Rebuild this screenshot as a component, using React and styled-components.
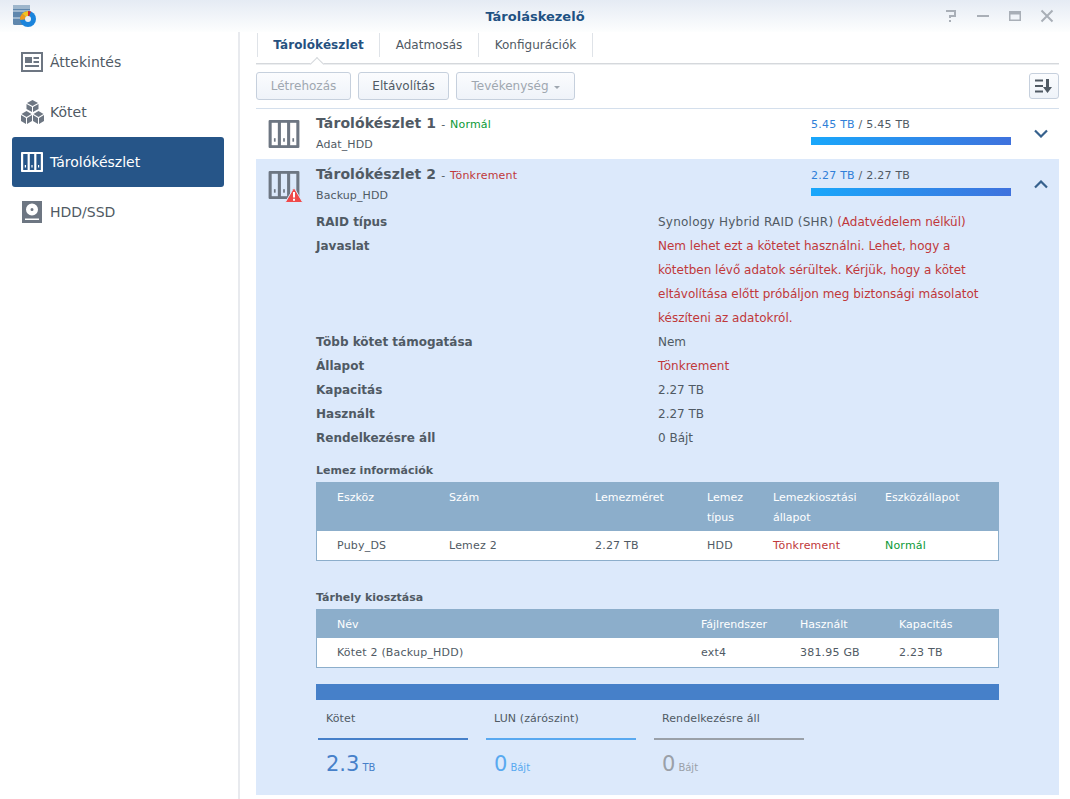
import React from 'react'
import styled, { createGlobalStyle } from 'styled-components'

const Global = createGlobalStyle`
	html, body { margin: 0; padding: 0; background: #fff; }
	body { font-family: "DejaVu Sans", Verdana, sans-serif; font-size: 12px; color: #505a64; }
`

const Window = styled.div`
	width: 1070px;
	height: 799px;
	overflow: hidden;
	display: flex;
	flex-direction: column;
`

const TitleBar = styled.div`
	height: 32px;
	flex: none;
	display: flex;
	align-items: center;
	position: relative;
	background: linear-gradient(#e5ebf4, #fdfefe);
	padding-left: 13px;
`

const WindowTitle = styled.div`
	position: absolute;
	left: 0;
	right: 0;
	text-align: center;
	font-size: 13px;
	font-weight: bold;
	color: #1f5283;
`

const WindowControls = styled.div`
	margin-left: auto;
	margin-right: 15px;
	display: flex;
	gap: 16px;
	position: relative;
`

const Body = styled.div`
	flex: 1;
	display: flex;
	min-height: 0;
`

const Sidebar = styled.div`
	width: 240px;
	flex: none;
	padding: 5px 14px 0 12px;
	box-sizing: border-box;
	border-right: 2px solid #e8eaee;
	margin-right: 16px;
`

const NavItem = styled.div`
	height: 50px;
	display: flex;
	align-items: center;
	padding-left: 9px;
	border-radius: 3px;
	font-size: 14px;
	color: ${props => props.$active ? '#fff' : '#505a64'};
	background: ${props => props.$active ? '#265588' : 'transparent'};
`

const NavIcon = styled.span`
	width: 29px;
	flex: none;
	display: flex;
	padding-left: ${props => props.$inset || 0}px;
	box-sizing: border-box;
`

const Main = styled.div`
	width: 803px;
	flex: none;
`

const Tabs = styled.div`
	height: 32px;
	box-sizing: border-box;
	display: flex;
	border-bottom: 1px solid #d5d8dc;
	box-shadow: 0 1px 0 #eceef0;
	position: relative;
`

const Tab = styled.div`
	width: ${props => props.$w}px;
	height: 24px;
	margin-top: 1px;
	padding-bottom: 1px;
	display: flex;
	align-items: center;
	justify-content: center;
	box-sizing: border-box;
	border-right: 1px solid #dfe3e8;
	font-size: 12px;
	letter-spacing: ${props => props.$active ? '0.1px' : '0'};
	font-weight: ${props => props.$active ? 'bold' : 'normal'};
	color: ${props => props.$active ? '#26517f' : '#505a64'};
	&:first-child { border-left: 1px solid #dfe3e8; margin-left: 1px; }
`

const Notch = styled.div`
	position: absolute;
	left: 56px;
	bottom: -1px;
	width: 9px;
	height: 9px;
	background: #fff;
	border-left: 1px solid #d5d8dc;
	border-top: 1px solid #d5d8dc;
	transform: translateY(5px) rotate(45deg);
`

const Toolbar = styled.div`
	height: 45px;
	display: flex;
	align-items: flex-start;
	gap: 7px;
	border-bottom: 1px solid #d4dfec;
	padding-top: 8px;
	box-sizing: border-box;
`

const Button = styled.div`
	height: 28px;
	width: ${props => props.$w}px;
	box-sizing: border-box;
	display: flex;
	align-items: center;
	justify-content: center;
	gap: 5px;
	border: 1px solid #c6d0dd;
	border-radius: 3px;
	background: linear-gradient(#fbfcfe, #eff3f9);
	font-size: 12px;
	color: ${props => props.$disabled ? '#9fa7b0' : '#505a64'};
`

const Caret = styled.span`
	width: 0;
	height: 0;
	border-left: 3px solid transparent;
	border-right: 3px solid transparent;
	border-top: 3px solid #9fa7b0;
	margin-top: 2px;
`

const SortButton = styled(Button)`
	margin-left: auto;
	margin-top: 1px;
	height: 26px;
`

const PoolRow = styled.div`
	height: ${props => props.$open ? '51px' : '50px'};
	box-sizing: border-box;
	padding-top: ${props => props.$open ? '1px' : '0'};
	display: grid;
	grid-template-columns: 60px 495px 200px 48px;
	background: ${props => props.$open ? '#dce9fb' : '#fff'};
`

const PoolIcon = styled.div`
	padding: 11px 0 0 12px;
	position: relative;
`

const PoolText = styled.div`
	padding-top: 4px;
`

const PoolName = styled.div`
	line-height: 20px;
	font-size: 14px;
	font-weight: bold;
	letter-spacing: 0.1px;
	color: #505a64;
	display: flex;
	align-items: baseline;
	gap: 5px;
`

const PoolStatus = styled.span`
	font-size: 11px;
	font-weight: normal;
	letter-spacing: 0.2px;
	color: #505a64;
	word-spacing: 1px;
`

const Status = styled.span`
	color: ${props => props.$bad ? '#c0383a' : '#0b9a36'};
`

const PoolSub = styled.div`
	font-size: 11px;
	line-height: 20px;
	letter-spacing: 0.1px;
`

const Usage = styled.div`
	padding-top: 7px;
	font-size: 11px;
	line-height: 18px;
	letter-spacing: 0.23px;
`

const UsageUsed = styled.span`
	color: #2f7fd8;
`

const UsageBar = styled.div`
	height: 8px;
	margin-top: 3px;
	background: linear-gradient(90deg, #19a7fb, #3f72dd);
`

const Chevron = styled.div`
	display: flex;
	justify-content: center;
	padding: 20px 0 0 12px;
`

const Detail = styled.div`
	background: #dce9fb;
	height: 585px;
	padding: 0 60px;
	box-sizing: border-box;
`

const InfoGrid = styled.div`
	display: grid;
	grid-template-columns: 342px 340px;
	line-height: 24px;
	font-size: 12px;
`

const InfoLabel = styled.div`
	font-weight: bold;
`

const InfoValue = styled.div`
	color: ${props => props.$bad ? '#c0383a' : '#505a64'};
`

const RaidName = styled.span`
	letter-spacing: 0.23px;
`

const Red = styled.span`
	color: #c0383a;
`

const SectionTitle = styled.div`
	font-size: 11px;
	font-weight: bold;
	line-height: 16px;
	margin-top: ${props => props.$top + 1}px;
	margin-bottom: 3px;
`

const Table = styled.table`
	width: 683px;
	table-layout: fixed;
	border-collapse: separate;
	border-spacing: 0;
	background: #fff;
	box-sizing: border-box;
	border: 1px solid #8caecb;
	font-size: 11px;
`

const Th = styled.th`
	width: ${props => props.$w}px;
	box-sizing: border-box;
	background: #8caecb;
	color: #fff;
	font-weight: normal;
	text-align: left;
	vertical-align: top;
	padding: 5px 8px 3px 20px;
	line-height: 20px;
`

const Td = styled.td`
	padding: 0 0 0 20px;
	height: 29px;
	letter-spacing: 0.2px;
	color: ${props => props.$c || '#505a64'};
`

const StackBar = styled.div`
	width: 683px;
	height: 16px;
	background: #4680c9;
	margin-top: 16px;
`

const Legend = styled.div`
	display: flex;
	gap: 18px;
	padding: 9px 0 0 2px;
`

const LegendItem = styled.div`
	width: 150px;
	color: ${props => props.$c};
`

const LegendLabel = styled.div`
	font-size: 11px;
	line-height: 20px;
	height: 29px;
	padding-left: 8px;
	letter-spacing: 0.1px;
	color: #505a64;
	border-bottom: 2px solid ${props => props.$c};
`

const LegendValue = styled.div`
	padding: 12px 0 0 8px;
	font-size: 10px;
	display: flex;
	align-items: baseline;
	gap: 3px;
`

const BigNum = styled.span`
	font-size: 21px;
`

const DocIcon = ({ color }) => (
	<svg width="22" height="20" viewBox="0 0 22 20">
		<path fillRule="evenodd" fill={color} d="M0 0h22v20H0zM2 2v16h18V2zM4 5h7v6H4zM12.500 5h5.500v2h-5.500zM12.500 9h5.500v2h-5.500zM4 13h14v2H4z" />
	</svg>
)

const CubesIcon = ({ color }) => (
	<svg width="23" height="24" viewBox="0 0 23 24">
		<g fill={color}>
			<path d="M11.500 0l5.500 3-5.500 3-5.500-3z" />
			<path d="M5.500 4l5.500 3v5l-5.500-3zM17.500 4l-5.500 3v5l5.500-3z" />
			<path d="M5.500 11l5 3-5 3-5-3z" />
			<path d="M0 15l5 3v6l-5-3zM11 15l-5 3v6l5-3z" />
			<path d="M17.500 11l5 3-5 3-5-3z" />
			<path d="M12 15l5 3v6l-5-3zM23 15l-5 3v6l5-3z" />
		</g>
	</svg>
)

const PoolGlyph = ({ color, hole, size = 22, height = 20 }) => (
	<svg width={size} height={height} viewBox="0 0 22 20">
		<rect width="22" height="20" rx="0.800" fill={color} />
		<g fill={hole}>
			<rect x="2.200" y="2" width="4.400" height="16" />
			<rect x="8.800" y="2" width="4.400" height="16" />
			<rect x="15.400" y="2" width="4.400" height="16" />
		</g>
		<g fill={color}>
			<rect x="3.800" y="13" width="1.200" height="2.500" />
			<rect x="10.400" y="13" width="1.200" height="2.500" />
			<rect x="17" y="13" width="1.200" height="2.500" />
		</g>
	</svg>
)

const DiskIcon = ({ color }) => (
	<svg width="20" height="22" viewBox="0 0 20 22">
		<path fillRule="evenodd" fill={color} d="M0 0h20v22H0zM10 2.500a6 6 0 1 0 0 12a6 6 0 1 0 0-12zM10 7a1.500 1.500 0 1 1 0 3a1.500 1.500 0 1 1 0-3zM3 17.500v1.500h14v-1.500z" />
	</svg>
)

const WarnIcon = styled.svg`
	position: absolute;
	left: 29px;
	top: 27px;
`

const AppIcon = () => (
	<svg width="24" height="22" viewBox="0 0 24 22">
		<rect x="0" y="0" width="17" height="20" rx="1.500" fill="#5f87ad" />
		<path d="M0 6h17M0 13h17" stroke="#dfe7ef" strokeWidth="1" />
		<rect x="0" y="0" width="17" height="4" fill="#9db6cc" />
		<circle cx="15" cy="14" r="8" fill="#1a84dc" />
		<path d="M15 14L9 8.500A8 8 0 0 1 15 6z" fill="#f4c21f" />
		<path d="M15 14V6a8 8 0 0 1 3 .6z" fill="#d92b2b" />
		<path d="M15 14L9 8.500A8 8 0 0 0 7.200 15z" fill="#f09a1a" />
		<circle cx="15" cy="14" r="3" fill="#e8eef5" />
	</svg>
)

const Chev = ({ up }) => (
	<svg width="14" height="9" viewBox="0 0 14 9">
		<path d={up ? 'M1 7.500L7 1.500l6 6' : 'M1 1.500L7 7.500l6-6'} fill="none" stroke="#36618d" strokeWidth="2.200" />
	</svg>
)

const diskCols = [112, 146, 112, 66, 112, 133]
const volCols = [364, 99, 99, 119]

export default function App() {
	return (
		<Window>
			<Global />
			<TitleBar>
				<AppIcon />
				<WindowTitle>Tároláskezelő</WindowTitle>
				<WindowControls>
					<svg width="16" height="14" viewBox="0 0 16 14"><path d="M3 2h9v5H7v2M7 11v2" fill="none" stroke="#a9afb7" strokeWidth="2" /></svg>
					<svg width="16" height="14" viewBox="0 0 16 14"><path d="M2 7h12" stroke="#a9afb7" strokeWidth="2" /></svg>
					<svg width="16" height="14" viewBox="0 0 16 14"><path fillRule="evenodd" d="M2 2h12v10H2zM3.500 5.500v5h9v-5z" fill="#a9afb7" /></svg>
					<svg width="16" height="14" viewBox="0 0 16 14"><path d="M2.500 1.500l11 11M13.500 1.500l-11 11" stroke="#a9afb7" strokeWidth="2" /></svg>
				</WindowControls>
			</TitleBar>
			<Body>
				<Sidebar>
					<NavItem><NavIcon><DocIcon color="#6d7682" /></NavIcon>Áttekintés</NavItem>
					<NavItem><NavIcon><CubesIcon color="#6d7682" /></NavIcon>Kötet</NavItem>
					<NavItem $active><NavIcon><PoolGlyph color="#fff" hole="#265588" /></NavIcon>Tárolókészlet</NavItem>
					<NavItem><NavIcon $inset={1}><DiskIcon color="#6d7682" /></NavIcon>HDD/SSD</NavItem>
				</Sidebar>
				<Main>
					<Tabs>
						<Tab $w={123} $active>Tárolókészlet</Tab>
						<Tab $w={99}>Adatmosás</Tab>
						<Tab $w={114}>Konfigurációk</Tab>
						<Notch />
					</Tabs>
					<Toolbar>
						<Button $w={95} $disabled>Létrehozás</Button>
						<Button $w={91}>Eltávolítás</Button>
						<Button $w={119} $disabled>Tevékenység <Caret /></Button>
						<SortButton $w={30}>
							<svg width="18" height="14" viewBox="0 0 18 14"><path d="M0 1.500h8M0 7h8M0 12.500h8" stroke="#505a64" strokeWidth="2" /><path d="M11 0h3v8h3l-4.500 6L8 8h3z" fill="#505a64" /></svg>
						</SortButton>
					</Toolbar>
					<PoolRow>
						<PoolIcon><PoolGlyph color="#6d7682" hole="#fff" size={32} height={28} /></PoolIcon>
						<PoolText>
							<PoolName>Tárolókészlet 1 <PoolStatus>- <Status>Normál</Status></PoolStatus></PoolName>
							<PoolSub>Adat_HDD</PoolSub>
						</PoolText>
						<Usage>
							<UsageUsed>5.45 TB</UsageUsed> / 5.45 TB
							<UsageBar />
						</Usage>
						<Chevron><Chev /></Chevron>
					</PoolRow>
					<PoolRow $open>
						<PoolIcon>
							<PoolGlyph color="#6d7682" hole="#dce9fb" size={32} height={28} />
							<WarnIcon width="18" height="16" viewBox="0 0 18 16">
								<path d="M9 0.500L17.800 15.500H0.200z" fill="#f04a4a" stroke="#dce9fb" strokeWidth="1" />
								<path d="M8 5h2v5.500H8zM8 11.800h2v2H8z" fill="#fff" />
							</WarnIcon>
						</PoolIcon>
						<PoolText>
							<PoolName>Tárolókészlet 2 <PoolStatus>- <Status $bad>Tönkrement</Status></PoolStatus></PoolName>
							<PoolSub>Backup_HDD</PoolSub>
						</PoolText>
						<Usage>
							<UsageUsed>2.27 TB</UsageUsed> / 2.27 TB
							<UsageBar />
						</Usage>
						<Chevron><Chev up /></Chevron>
					</PoolRow>
					<Detail>
						<InfoGrid>
							<InfoLabel>RAID típus</InfoLabel>
							<InfoValue><RaidName>Synology Hybrid RAID (SHR)</RaidName> <Red>(Adatvédelem nélkül)</Red></InfoValue>
							<InfoLabel>Javaslat</InfoLabel>
							<InfoValue $bad>Nem lehet ezt a kötetet használni. Lehet, hogy a kötetben lévő adatok sérültek. Kérjük, hogy a kötet eltávolítása előtt próbáljon meg biztonsági másolatot készíteni az adatokról.</InfoValue>
							<InfoLabel>Több kötet támogatása</InfoLabel>
							<InfoValue>Nem</InfoValue>
							<InfoLabel>Állapot</InfoLabel>
							<InfoValue $bad>Tönkrement</InfoValue>
							<InfoLabel>Kapacitás</InfoLabel>
							<InfoValue>2.27 TB</InfoValue>
							<InfoLabel>Használt</InfoLabel>
							<InfoValue>2.27 TB</InfoValue>
							<InfoLabel>Rendelkezésre áll</InfoLabel>
							<InfoValue>0 Bájt</InfoValue>
						</InfoGrid>
						<SectionTitle $top={12}>Lemez információk</SectionTitle>
						<Table>
							<thead>
								<tr>
									{['Eszköz', 'Szám', 'Lemezméret', 'Lemez típus', 'Lemezkiosztási állapot', 'Eszközállapot'].map((h, i) => (
										<Th key={h} $w={diskCols[i]}>{h}</Th>
									))}
								</tr>
							</thead>
							<tbody>
								<tr>
									<Td>Puby_DS</Td>
									<Td>Lemez 2</Td>
									<Td>2.27 TB</Td>
									<Td>HDD</Td>
									<Td $c="#c0383a">Tönkrement</Td>
									<Td $c="#0b9a36">Normál</Td>
								</tr>
							</tbody>
						</Table>
						<SectionTitle $top={28}>Tárhely kiosztása</SectionTitle>
						<Table>
							<thead>
								<tr>
									{['Név', 'Fájlrendszer', 'Használt', 'Kapacitás'].map((h, i) => (
										<Th key={h} $w={volCols[i]}>{h}</Th>
									))}
								</tr>
							</thead>
							<tbody>
								<tr>
									<Td>Kötet 2 (Backup_HDD)</Td>
									<Td>ext4</Td>
									<Td>381.95 GB</Td>
									<Td>2.23 TB</Td>
								</tr>
							</tbody>
						</Table>
						<StackBar />
						<Legend>
							<LegendItem $c="#4680c9">
								<LegendLabel $c="#4680c9">Kötet</LegendLabel>
								<LegendValue><BigNum>2.3</BigNum> TB</LegendValue>
							</LegendItem>
							<LegendItem $c="#59a9f0">
								<LegendLabel $c="#59a9f0">LUN (zárószint)</LegendLabel>
								<LegendValue><BigNum>0</BigNum> Bájt</LegendValue>
							</LegendItem>
							<LegendItem $c="#9aa0a8">
								<LegendLabel $c="#9aa0a8">Rendelkezésre áll</LegendLabel>
								<LegendValue><BigNum>0</BigNum> Bájt</LegendValue>
							</LegendItem>
						</Legend>
					</Detail>
				</Main>
			</Body>
		</Window>
	)
}
